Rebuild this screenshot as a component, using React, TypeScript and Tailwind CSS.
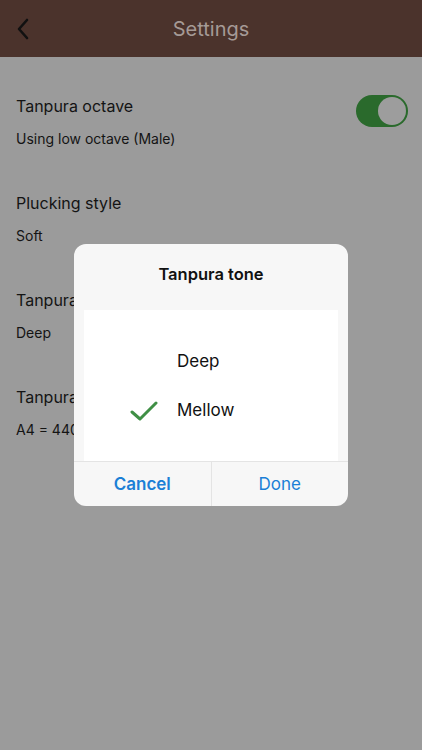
import React from "react";

const rows = [
  { t: "Tanpura octave", s: "Using low octave (Male)", toggle: true },
  { t: "Plucking style", s: "Soft" },
  { t: "Tanpura tone", s: "Deep" },
  { t: "Tanpura tuning", s: "A4 = 440 Hz" },
];

export default function App() {
  return (
    <div
      className="relative w-[422px] h-[750px] overflow-hidden bg-[#9b9b9b]"
      style={{ fontFamily: "Inter, 'Noto Sans', sans-serif" }}
    >
      <div className="h-[57px] bg-[#4b332c] flex items-center relative">
        <svg width="14" height="22" viewBox="0 0 14 22" className="absolute left-[16px] top-[18px]">
          <path d="M11 2 L3 11 L11 20" fill="none" stroke="#111" strokeWidth="2.6" strokeLinecap="round" strokeLinejoin="round" />
        </svg>
        <div className="w-full text-center text-[20px] text-[#a59a96]">Settings</div>
      </div>
      <div className="px-4 pt-[37px] flex flex-col gap-[42px]">
        {rows.map((r) => (
          <div key={r.t} className="flex items-start justify-between">
            <div className="flex flex-col gap-[11px]">
              <div className="text-[16px] leading-[24px] text-[#141414]">{r.t}</div>
              <div className="text-[14px] leading-[20px] text-[#141414]">{r.s}</div>
            </div>
            {r.toggle && (
              <div className="w-[52px] h-[32px] rounded-full bg-[#2a6a2c] flex items-center justify-end pr-[2px] mr-[-2px] mt-[1px]">
                <div className="w-[28px] h-[28px] rounded-full bg-[#9d9d9d]" />
              </div>
            )}
          </div>
        ))}
      </div>
      <div className="absolute left-[74px] top-[244px] w-[274px] rounded-[12px] bg-[#f7f7f7] overflow-hidden">
        <div className="h-[66px] flex justify-center pt-[18px] text-[16.5px] leading-[24px] font-semibold text-[#111]">
          Tanpura tone
        </div>
        <div className="mx-[10px] bg-white h-[151px] flex flex-col justify-center gap-[25px] pt-[2px]">
          <div className="flex items-center h-[24px]">
            <div className="w-[93px]" />
            <div className="text-[17px] text-[#111]">Deep</div>
          </div>
          <div className="flex items-center h-[24px]">
            <div className="w-[93px] flex justify-end pr-[19px]">
              <svg width="28" height="22" viewBox="0 0 28 22">
                <path d="M2 12 L10 19 L26 3" fill="none" stroke="#3f8f45" strokeWidth="3" strokeLinecap="round" strokeLinejoin="round" />
              </svg>
            </div>
            <div className="text-[17px] text-[#111]">Mellow</div>
          </div>
        </div>
        <div className="flex h-[45px] border-t border-[#e4e4e4]">
          <div className="flex-1 flex items-center justify-center text-[17px] font-semibold text-[#1b7fd6] border-r border-[#e4e4e4] pt-[2px]">
            Cancel
          </div>
          <div className="flex-1 flex items-center justify-center text-[17px] text-[#1b7fd6] pt-[2px]">Done</div>
        </div>
      </div>
    </div>
  );
}
